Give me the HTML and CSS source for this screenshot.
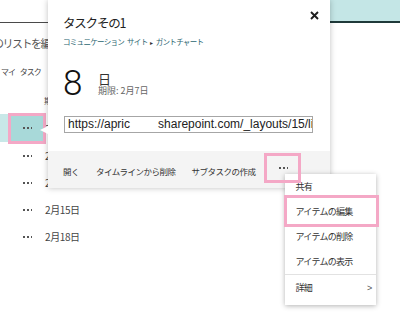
FILE: index.html
```html
<!DOCTYPE html>
<html lang="ja">
<head>
    <meta charset="UTF-8">
    <meta name="viewport" content="width=device-width, initial-scale=1.0">
    <title>タイムライン</title>
    <link rel="stylesheet" href="styles.css">
</head>
<body>
<div class="page">

    <div class="topbar">
        <div class="topbar-left"></div>
        <div class="topbar-right"></div>
    </div>

    <div class="list-title">のリストを編集</div>
    <div class="view-name">マイ タスク</div>
    <div class="col-head">期限</div>

    <div class="task-list">
        <div class="task-row first">
            <div class="handle selected"><span class="dots"></span></div>
            <span class="date">2月7日</span>
        </div>
        <div class="task-row">
            <div class="handle"><span class="dots"></span></div>
            <span class="date">2月10日</span>
        </div>
        <div class="task-row">
            <div class="handle"><span class="dots"></span></div>
            <span class="date">2月12日</span>
        </div>
        <div class="task-row">
            <div class="handle"><span class="dots"></span></div>
            <span class="date">2月15日</span>
        </div>
        <div class="task-row">
            <div class="handle"><span class="dots"></span></div>
            <span class="date">2月18日</span>
        </div>
    </div>

    <!-- Task callout -->
    <div class="callout">
        <button class="close" aria-label="閉じる">
            <svg width="9" height="9" viewBox="0 0 9 9">
                <path d="M1 1 L8 8 M8 1 L1 8" stroke="#1e1e1e" stroke-width="1.9" fill="none"/>
            </svg>
        </button>

        <div class="callout-body">
            <div class="task-title">タスクその1</div>
            <div class="breadcrumb"><span class="crumb">コミュニケーション サイト</span><span class="sep">▸</span><span class="crumb">ガントチャート</span></div>
            <div class="due">
                <span class="days">8</span>
                <div class="due-text">
                    <span class="unit">日</span>
                    <span class="deadline">期限: 2月7日</span>
                </div>
            </div>
            <div class="url-box"><span>https://apric</span><span class="redacted"></span><span>sharepoint.com/_layouts/15/listform.aspx</span></div>
        </div>

        <div class="callout-footer">
            <span class="action">開く</span>
            <span class="action">タイムラインから削除</span>
            <span class="action">サブタスクの作成</span>
            <div class="more">
                <span class="dots"></span>
                <div class="menu">
                    <div class="menu-item">共有</div>
                    <div class="menu-item marked">アイテムの編集</div>
                    <div class="menu-item">アイテムの削除</div>
                    <div class="menu-item">アイテムの表示</div>
                    <div class="menu-item sub">詳細<span class="arrow">&gt;</span></div>
                </div>
            </div>
        </div>
    </div>

</div>
</body>
</html>
```

FILE: styles.css
```css
body {
    margin: 0;
    background: white;
    font-family: "Noto Sans CJK JP", "Noto Sans", sans-serif;
    color: #444;
}

.page {
    position: relative;
    width: 400px;
    height: 323px;
    overflow: hidden;
}

/* Background page */
.topbar {
    display: flex;
    height: 23px;
}

.topbar-left {
    flex: 1;
    border-bottom: 1px solid #4a4a4a;
}

.topbar-right {
    width: 90px;
    background: #c4e6e6;
    border-bottom: 2px solid #1f3a3a;
}

.list-title {
    margin: 12px 0 0 -7px;
    font-size: 11px;
    line-height: 16px;
    letter-spacing: -1.5px;
    color: #555;
    white-space: nowrap;
}

.view-name {
    margin: 15px 0 0 1px;
    font-size: 8px;
    line-height: 12px;
    letter-spacing: -1px;
    word-spacing: 4px;
    color: #444;
}

.col-head {
    margin: 16px 0 0 44px;
    font-size: 8.5px;
    line-height: 12px;
    color: #555;
}

.task-list {
    margin-top: 8px;
}

.task-row {
    display: flex;
    align-items: center;
    height: 27px;
}

.task-row.first {
    height: 28px;
}

.handle {
    position: relative;
    display: flex;
    align-items: center;
    box-sizing: border-box;
    width: 45px;
    height: 100%;
    padding-left: 22px;
}

.handle.selected {
    background: linear-gradient(to right, #c8e8e8 8px, #a8d9d9 8px);
}

.handle.selected::after {
    content: "";
    position: absolute;
    top: -1px;
    bottom: -2px;
    left: 8px;
    right: -1px;
    border: 3px solid #f4a8c6;
}

.dots {
    display: inline-block;
    width: 10px;
    height: 2px;
    background: radial-gradient(circle, #555 0.9px, transparent 1.2px) 0 0 / 4px 2px repeat-x;
}

.date {
    font-size: 10px;
    letter-spacing: -0.4px;
    color: #444;
}

/* Callout */
.callout {
    position: absolute;
    top: 0;
    left: 48px;
    z-index: 2;
    display: flex;
    flex-direction: column;
    width: 282px;
    height: 188px;
    background: white;
    box-shadow: 0 0 6px rgba(0, 0, 0, 0.25);
}

.callout::before {
    content: "";
    position: absolute;
    top: 126px;
    left: -8px;
    border-right: 8px solid white;
    border-top: 4px solid transparent;
    border-bottom: 4px solid transparent;
}

.close {
    position: absolute;
    top: 11px;
    right: 11px;
    padding: 0;
    border: none;
    background: none;
    line-height: 0;
}

.callout-body {
    padding: 14px 17px 0 15px;
}

.task-title {
    font-size: 12.5px;
    line-height: 17px;
    letter-spacing: -1.2px;
    color: #222;
}

.breadcrumb {
    margin-top: 6px;
    font-size: 7.5px;
    line-height: 10px;
    letter-spacing: -0.7px;
    word-spacing: 2px;
    color: #2b6670;
    white-space: nowrap;
}

.breadcrumb .sep {
    margin: 0 3px;
    font-size: 6px;
    color: #333;
}

.due {
    display: flex;
    align-items: flex-start;
    margin-top: 18px;
}

.days {
    width: 20px;
    font-family: Roboto, "Liberation Sans", sans-serif;
    font-weight: 300;
    font-size: 35px;
    line-height: 35px;
    color: #111;
}

.due-text {
    display: flex;
    flex-direction: column;
    margin-left: 15px;
    padding-top: 6px;
}

.unit {
    font-size: 13px;
    line-height: 13px;
    color: #333;
}

.deadline {
    margin-top: 1px;
    font-size: 9px;
    line-height: 10px;
    color: #666;
}

.url-box {
    box-sizing: border-box;
    width: 249px;
    height: 17px;
    margin: 15px 0 0 1px;
    padding: 0 3px;
    border: 1px solid #a6a6a6;
    font-family: "Liberation Sans", sans-serif;
    font-size: 12px;
    line-height: 15px;
    color: #222;
    white-space: nowrap;
    overflow: hidden;
}

.redacted {
    display: inline-block;
    width: 28px;
}

.callout-footer {
    display: flex;
    align-items: center;
    height: 37px;
    margin-top: auto;
    padding-left: 15px;
    background: #f4f4f4;
}

.action {
    margin: 3px 16px 0 0;
    font-size: 8.5px;
    line-height: 12px;
    letter-spacing: -0.5px;
    color: #333;
    white-space: nowrap;
}

.action:first-child {
    margin-right: 17px;
}

.more {
    position: relative;
    display: flex;
    align-items: center;
    justify-content: center;
    box-sizing: border-box;
    width: 37px;
    height: 30px;
    margin: 0 0 3px -7px;
}

.more::after {
    content: "";
    position: absolute;
    inset: 0;
    z-index: 5;
    border: 3px solid #f4a8c6;
}

/* Drop-down menu */
.menu {
    position: absolute;
    top: 21px;
    left: 21px;
    z-index: 4;
    width: 91px;
    padding-bottom: 5px;
    background: white;
    box-shadow: 0 1px 5px rgba(0, 0, 0, 0.3);
}

.menu-item {
    position: relative;
    display: flex;
    align-items: center;
    justify-content: space-between;
    height: 25px;
    padding: 0 5px 0 10px;
    font-size: 9px;
    letter-spacing: -0.7px;
    color: #333;
    white-space: nowrap;
}

.menu-item.marked::after {
    content: "";
    position: absolute;
    top: -4px;
    bottom: -3px;
    left: -1px;
    right: -3px;
    border: 3px solid #f4a8c6;
}

.menu-item.sub {
    border-top: 1px solid #e2e2e2;
}

.arrow {
    font-family: "Liberation Sans", sans-serif;
    font-size: 9px;
    color: #555;
}
```
